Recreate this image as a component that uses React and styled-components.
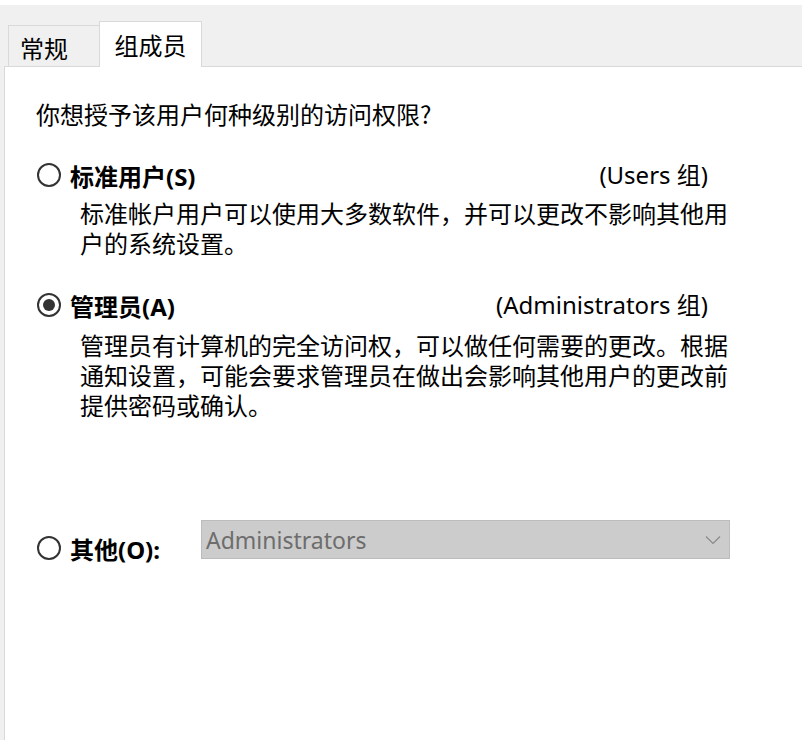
import React from "react";
import styled, { createGlobalStyle } from "styled-components";

const GlobalStyle = createGlobalStyle`
  html, body {
    margin: 0;
    padding: 0;
    background: #ffffff;
  }
  body {
    font-family: "Noto Sans", "Noto Sans CJK SC", sans-serif;
    color: #000;
  }
`;

export const Window = styled.div`
  padding-top: 5px;
  background: #ffffff;
  width: 802px;
  height: 740px;
  box-sizing: border-box;
  overflow: hidden;
`;

export const Frame = styled.div`
  background: #f0f0f0;
  padding-left: 4px;
  height: 735px;
  display: flex;
  flex-direction: column;
`;

export const TabBar = styled.div`
  display: flex;
  align-items: flex-end;
  height: 61px;
  padding-left: 4px;
  position: relative;
  z-index: 1;
`;

export const Tab = styled.div`
  box-sizing: border-box;
  display: flex;
  align-items: center;
  justify-content: ${({ $active }) => ($active ? "center" : "flex-start")};
  font-family: "Noto Sans CJK SC", sans-serif;
  font-size: 24px;
  line-height: 30px;
  border: 1px solid #d9d9d9;
  border-bottom: none;
  width: ${({ $active }) => ($active ? "103px" : "92px")};
  height: ${({ $active }) => ($active ? "46px" : "41px")};
  margin-bottom: ${({ $active }) => ($active ? "-1px" : "0")};
  margin-left: ${({ $active }) => ($active ? "-1px" : "0")};
  padding-top: ${({ $active }) => ($active ? "0" : "3px")};
  padding-left: ${({ $active }) => ($active ? "0" : "11px")};
  background: ${({ $active }) => ($active ? "#ffffff" : "#f0f0f0")};
`;

export const Panel = styled.div`
  flex: 1;
  background: #ffffff;
  border-top: 1px solid #d9d9d9;
  border-left: 1px solid #d9d9d9;
  padding: 32px 0 0 31px;
`;

export const Question = styled.div`
  font-family: "Noto Sans CJK SC", sans-serif;
  font-size: 24px;
  line-height: 30px;
  margin-bottom: 31px;
`;

export const Option = styled.div`
  width: 694px;
  margin-bottom: ${({ $gap }) => $gap || 0}px;
`;

export const OptionHead = styled.div`
  display: flex;
  align-items: center;
  justify-content: space-between;
  padding: 0 22px 0 1px;
  height: 30px;
`;

export const RadioLabel = styled.div`
  display: flex;
  align-items: center;
  gap: 9px;
  font-family: "Noto Sans", "Noto Sans CJK SC", sans-serif;
  font-weight: 700;
  font-size: 24px;
  width: ${({ $width }) => ($width ? `${$width}px` : "auto")};
  flex-shrink: 0;
`;

export const Radio = styled.span`
  box-sizing: border-box;
  width: 24px;
  height: 24px;
  border-radius: 50%;
  border: 2px solid #333;
  display: flex;
  align-items: center;
  justify-content: center;
  flex-shrink: 0;

  &::after {
    content: "";
    display: ${({ $checked }) => ($checked ? "block" : "none")};
    width: 12px;
    height: 12px;
    border-radius: 50%;
    background: #333;
  }
`;

export const Group = styled.span`
  font-family: "Noto Sans", "Noto Sans CJK SC", sans-serif;
  font-size: 24px;
  margin-top: -4px;
`;

export const Desc = styled.div`
  font-family: "Noto Sans CJK SC", sans-serif;
  font-size: 24px;
  line-height: 30px;
  width: 652px;
  margin: ${({ $top }) => $top}px 0 0 44px;
`;

export const OtherRow = styled.div`
  display: flex;
  align-items: flex-start;
  padding-left: 1px;
`;

export const OtherLabel = styled(RadioLabel)`
  margin-top: 13px;
  height: 30px;
`;

export const Select = styled.div`
  box-sizing: border-box;
  width: 529px;
  height: 39px;
  background: #cccccc;
  border: 1px solid #bcbcbc;
  display: flex;
  align-items: center;
  justify-content: space-between;
  padding: 0 8px 0 4px;
  color: #6d6d6d;
  font-family: "Noto Sans", sans-serif;
  font-size: 23px;
`;

const Chevron = () => (
  <svg width="16" height="10" viewBox="0 0 16 10">
    <path d="M1 1.5 L8 8.5 L15 1.5" fill="none" stroke="#8a8a8a" strokeWidth="1.2" />
  </svg>
);

export default function App() {
  return (
    <>
      <GlobalStyle />
      <Window>
        <Frame>
          <TabBar>
            <Tab>常规</Tab>
            <Tab $active>组成员</Tab>
          </TabBar>
          <Panel>
            <Question>你想授予该用户何种级别的访问权限?</Question>

            <Option $gap={32}>
              <OptionHead>
                <RadioLabel>
                  <Radio />
                  标准用户(S)
                </RadioLabel>
                <Group>(Users 组)</Group>
              </OptionHead>
              <Desc $top={8}>
                标准帐户用户可以使用大多数软件，并可以更改不影响其他用户的系统设置。
              </Desc>
            </Option>

            <Option $gap={100}>
              <OptionHead>
                <RadioLabel>
                  <Radio $checked />
                  管理员(A)
                </RadioLabel>
                <Group>(Administrators 组)</Group>
              </OptionHead>
              <Desc $top={10}>
                管理员有计算机的完全访问权，可以做任何需要的更改。根据通知设置，可能会要求管理员在做出会影响其他用户的更改前提供密码或确认。
              </Desc>
            </Option>

            <OtherRow>
              <OtherLabel $width={164}>
                <Radio />
                其他(O):
              </OtherLabel>
              <Select>
                <span>Administrators</span>
                <Chevron />
              </Select>
            </OtherRow>
          </Panel>
        </Frame>
      </Window>
    </>
  );
}
